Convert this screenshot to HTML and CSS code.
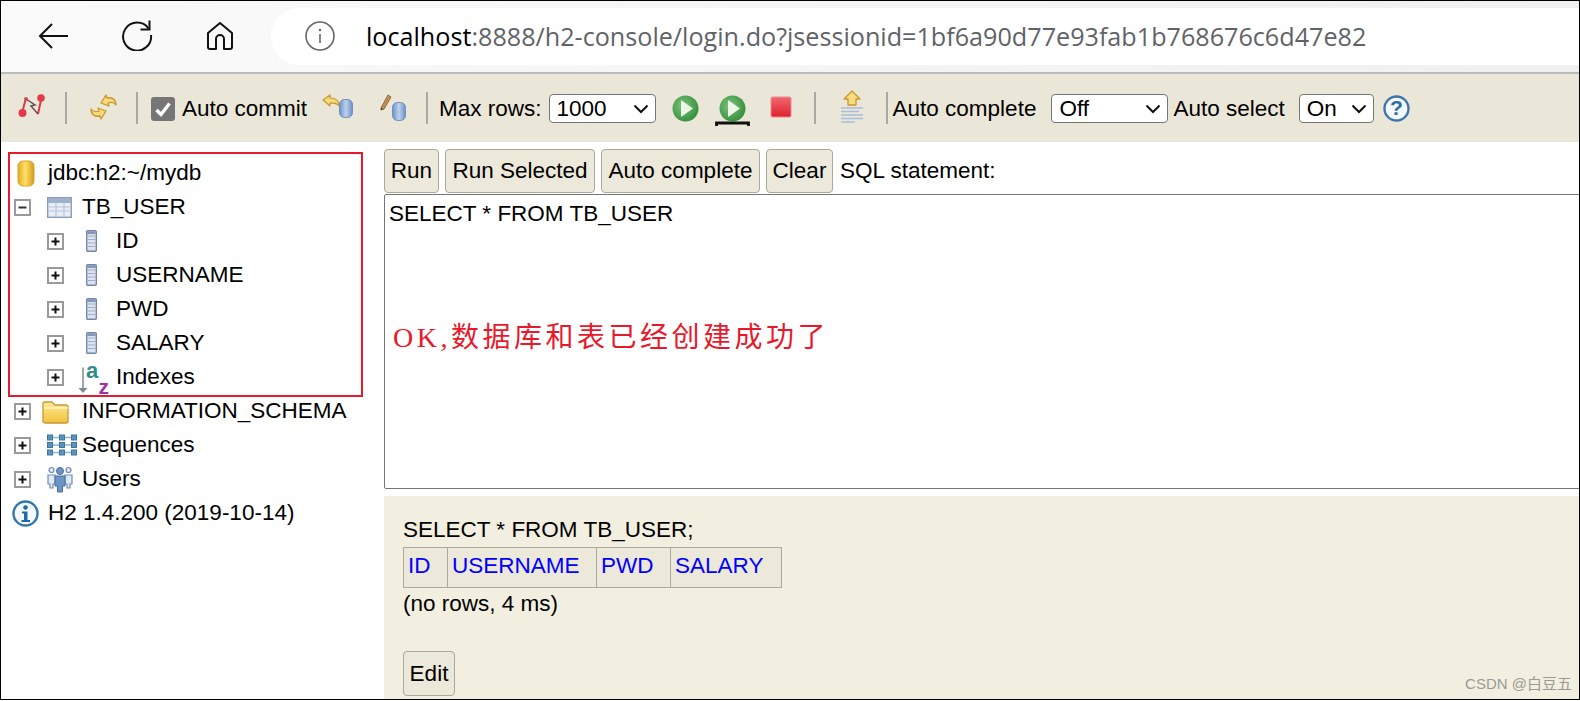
FILE: index.html
```html
<!DOCTYPE html>
<html lang="en">
<head>
<meta charset="utf-8">
<title>H2 Console</title>
<link rel="stylesheet" href="styles.css">
</head>
<body>
<svg class="defs" width="0" height="0" aria-hidden="true">
  <defs>
    <linearGradient id="gold" x1="0" x2="1" y1="0" y2="0"><stop offset="0" stop-color="#e2aa20"/><stop offset=".45" stop-color="#ffe06a"/><stop offset="1" stop-color="#d69a1c"/></linearGradient>
    <linearGradient id="bluedb" x1="0" x2="1" y1="0" y2="0"><stop offset="0" stop-color="#6f92c8"/><stop offset=".5" stop-color="#bcd2ee"/><stop offset="1" stop-color="#6c8fc5"/></linearGradient>
    <radialGradient id="green" cx=".4" cy=".4" r=".7"><stop offset="0" stop-color="#7fc37f"/><stop offset="1" stop-color="#2c8a35"/></radialGradient>
    <linearGradient id="redstop" x1="0" x2="0" y1="0" y2="1"><stop offset="0" stop-color="#f06a72"/><stop offset="1" stop-color="#e0202e"/></linearGradient>
    <linearGradient id="fold" x1="0" x2="0" y1="0" y2="1"><stop offset="0" stop-color="#ffeb94"/><stop offset="1" stop-color="#f0c23e"/></linearGradient>
    <symbol id="ico-column" viewBox="0 0 11 22">
      <rect x=".7" y=".7" width="9.6" height="20.6" rx="1" fill="#dde3ee" stroke="#7485a5" stroke-width="1.4"/>
      <path d="M2 6h7M2 9.500h7M2 13h7M2 16.500h7" stroke="#9fafc9" stroke-width="1.2"/>
      <rect x="1.400" y="1.400" width="8.200" height="2.600" fill="#8497b8"/>
    </symbol>
    <symbol id="ico-plus" viewBox="0 0 17 17">
      <rect x="1" y="1" width="15" height="15" fill="#fff" stroke="#9a9a9a" stroke-width="2"/>
      <path d="M4.500 8.500h8M8.500 4.500v8" stroke="#111" stroke-width="2"/>
    </symbol>
  </defs>
</svg>

<div class="frame">
  <header class="chrome">
    <svg class="nav-back" width="32" height="28" viewBox="0 0 32 28"><path d="M15 2 3 14l12 12M3 14h28" fill="none" stroke="#111" stroke-width="2"/></svg>
    <svg class="nav-reload" width="32" height="32" viewBox="0 0 32 32"><path d="M27.500 9.500A14 14 0 1 0 30 16" fill="none" stroke="#111" stroke-width="2"/><path d="M28.500 1.500v9h-9" fill="none" stroke="#111" stroke-width="2"/></svg>
    <svg class="nav-home" width="28" height="30" viewBox="0 0 28 30"><path d="M2 12 14 2l12 10v14a2 2 0 0 1-2 2h-6V18a4 4 0 0 0-8 0v10H4a2 2 0 0 1-2-2z" fill="none" stroke="#111" stroke-width="2" stroke-linejoin="round"/></svg>
    <div class="urlbar">
      <svg class="url-info" width="30" height="30" viewBox="0 0 30 30"><circle cx="15" cy="15" r="14" fill="none" stroke="#666" stroke-width="1.600"/><path d="M15 13v9" stroke="#666" stroke-width="1.600"/><circle cx="15" cy="9" r="1.200" fill="#666"/></svg>
      <span class="url-host">localhost</span><span class="url-rest">:8888/h2-console/login.do?jsessionid=1bf6a90d77e93fab1b768676c6d47e82</span>
    </div>
  </header>

  <div class="toolbar">
    <svg class="t-disc" width="27" height="24" viewBox="0 0 27 24"><path d="M4.500 17 7.500 6" stroke="#d83a4a" stroke-width="2"/><path d="M23 6 20 20" stroke="#d83a4a" stroke-width="2"/><path d="M8 5l9 6-4 1 7 8" fill="none" stroke="#6b4a4a" stroke-width="1.500"/><circle cx="4.500" cy="19" r="4" fill="#e2394c"/><circle cx="23" cy="4" r="3.800" fill="#e2394c"/><circle cx="8" cy="5" r="2" fill="#d24a55"/></svg>
    <i class="sep s-a"></i>
    <svg class="t-sync" width="27" height="28" viewBox="0 0 27 28"><path d="M11 10l5-8 1 3c5-1 9 1 9 7-2-3-5-3-8-2l1 3z" fill="#f6da7c" stroke="#c9962e" stroke-width="1.300" stroke-linejoin="round"/><path d="M16 18l-5 8-1-3c-5 1-9-1-9-7 2 3 5 3 8 2l-1-3z" fill="#f6da7c" stroke="#c9962e" stroke-width="1.300" stroke-linejoin="round"/></svg>
    <i class="sep s-b"></i>
    <label class="commit"><span class="check"><svg width="24" height="24" viewBox="0 0 24 24"><path d="M5.500 13l4.500 4.500 8.500-11" fill="none" stroke="#fff" stroke-width="3.400"/></svg></span>Auto commit</label>
    <svg class="t-rollback" width="31" height="24" viewBox="0 0 31 24"><path d="M1 6l7-5v3c5 0 9 2 9 8-2-3-5-3-9-3v3z" fill="#f6da7c" stroke="#c9962e" stroke-width="1.200" stroke-linejoin="round"/><rect x="17.500" y="5.500" width="13" height="18" rx="5" fill="url(#bluedb)" stroke="#6f8fc0"/></svg>
    <svg class="t-edit" width="26" height="27" viewBox="0 0 26 27"><path d="M1 14 8 1l3 2-7 12-3 1z" fill="#c68f4c" stroke="#8b6a3e"/><path d="M1 14l2 1-2 1z" fill="#333"/><rect x="12.500" y="8.500" width="13" height="18" rx="5" fill="url(#bluedb)" stroke="#6f8fc0"/></svg>
    <i class="sep s-c"></i>
    <span class="lbl l-max">Max rows:</span>
    <span class="sel sel-rows"><select aria-label="Max rows"><option>1000</option></select><svg width="16" height="10" viewBox="0 0 16 10"><path d="M1.500 1.500 8 8l6.500-6.500" fill="none" stroke="#111" stroke-width="2"/></svg></span>
    <svg class="t-run" width="27" height="27" viewBox="0 0 27 27"><circle cx="13.500" cy="13.500" r="13" fill="url(#green)"/><path d="M9 5l12 8.500L9 22z" fill="#eef5e6"/></svg>
    <svg class="t-runsel" width="35" height="31" viewBox="0 0 35 31"><circle cx="17.500" cy="13.500" r="13" fill="url(#green)"/><path d="M13 5l12 8.500L13 22z" fill="#eef5e6"/><path d="M1.500 31v-3h32v3" fill="none" stroke="#111" stroke-width="2.800"/></svg>
    <svg class="t-stop" width="22" height="22" viewBox="0 0 22 22"><rect x="1" y="1" width="20" height="20" rx="1.500" fill="url(#redstop)" stroke="#e88c90"/></svg>
    <i class="sep s-d"></i>
    <svg class="t-hist" width="24" height="35" viewBox="0 0 24 35"><path d="M12 1l8 8h-4v6H8V9H4z" fill="#f8dc80" stroke="#c9962e" stroke-width="1.300" stroke-linejoin="round"/><path d="M1 18h22M1 21.500h18M1 25h22M1 28.500h22M1 32h14" stroke="#a9bcdd" stroke-width="1.500"/></svg>
    <i class="sep s-e"></i>
    <span class="lbl l-ac">Auto complete</span>
    <span class="sel sel-off"><select aria-label="Auto complete"><option>Off</option></select><svg width="16" height="10" viewBox="0 0 16 10"><path d="M1.500 1.500 8 8l6.500-6.500" fill="none" stroke="#111" stroke-width="2"/></svg></span>
    <span class="lbl l-as">Auto select</span>
    <span class="sel sel-on"><select aria-label="Auto select"><option>On</option></select><svg width="16" height="10" viewBox="0 0 16 10"><path d="M1.500 1.500 8 8l6.500-6.500" fill="none" stroke="#111" stroke-width="2"/></svg></span>
    <svg class="t-help" width="27" height="27" viewBox="0 0 27 27"><circle cx="13.500" cy="13.500" r="12" fill="#f3f8fd" stroke="#3f75ab" stroke-width="2.400"/><text x="13.500" y="20" text-anchor="middle" class="glyph-help">?</text></svg>
  </div>

  <main class="main">
    <nav class="tree">
      <div class="marked">
        <div class="row row-db">
          <span class="db-cell"><svg width="18" height="27" viewBox="0 0 18 27"><rect x="1" y="1" width="16" height="25" rx="5" fill="url(#gold)" stroke="#d9a32a"/></svg></span>
          <span>jdbc:h2:~/mydb</span>
        </div>
        <div class="row">
          <svg class="toggle" viewBox="0 0 17 17"><rect x="1" y="1" width="15" height="15" fill="#fff" stroke="#9a9a9a" stroke-width="2"/><path d="M4.500 8.500h8" stroke="#333" stroke-width="2"/></svg>
          <span class="ic-cell"><svg width="25" height="21" viewBox="0 0 25 21"><rect x=".7" y=".7" width="23.600" height="19.600" fill="#e8edf5" stroke="#8b9dbc" stroke-width="1.400"/><rect x="1" y="1" width="23" height="5" fill="#9fb0cc"/><path d="M2 10h21M2 14h21M9 6v14M17 6v14" stroke="#b8c6dc" stroke-width="1.200"/></svg></span>
          <span>TB_USER</span>
        </div>
        <div class="row lvl1"><svg class="toggle"><use href="#ico-plus"/></svg><span class="ic-cell col"><svg width="11" height="22"><use href="#ico-column"/></svg></span><span>ID</span></div>
        <div class="row lvl1"><svg class="toggle"><use href="#ico-plus"/></svg><span class="ic-cell col"><svg width="11" height="22"><use href="#ico-column"/></svg></span><span>USERNAME</span></div>
        <div class="row lvl1"><svg class="toggle"><use href="#ico-plus"/></svg><span class="ic-cell col"><svg width="11" height="22"><use href="#ico-column"/></svg></span><span>PWD</span></div>
        <div class="row lvl1"><svg class="toggle"><use href="#ico-plus"/></svg><span class="ic-cell col"><svg width="11" height="22"><use href="#ico-column"/></svg></span><span>SALARY</span></div>
        <div class="row lvl1">
          <svg class="toggle"><use href="#ico-plus"/></svg>
          <span class="ic-cell idx"><svg width="32" height="42" viewBox="0 0 32 42"><path d="M5 11.500v22" stroke="#7d8a94" stroke-width="1.500"/><path d="M.5 32h9L5 37z" fill="#7d8a94"/><text x="8" y="21.500" class="glyph-a">a</text><text x="20.400" y="37.500" class="glyph-z">z</text></svg></span>
          <span>Indexes</span>
        </div>
      </div>
      <div class="row">
        <svg class="toggle"><use href="#ico-plus"/></svg>
        <span class="ic-cell ic-wide"><svg width="28" height="25" viewBox="0 0 28 25"><path d="M1 5a2 2 0 0 1 2-2h7l3 3h11a2 2 0 0 1 2 2v14a2 2 0 0 1-2 2H3a2 2 0 0 1-2-2z" fill="url(#fold)" stroke="#c79a34" stroke-width="1.300"/><path d="M2 9h24" stroke="#fff6c8" stroke-width="1.500"/></svg></span>
        <span>INFORMATION_SCHEMA</span>
      </div>
      <div class="row">
        <svg class="toggle"><use href="#ico-plus"/></svg>
        <span class="ic-cell"><svg width="30" height="22" viewBox="0 0 30 22"><path d="M2 3.500h26M2 11h26M2 18.500h26" stroke="#8fb5d4" stroke-width="1.500"/><g fill="#5b93bd" stroke="#3d779f"><rect x=".5" y="1" width="5" height="5"/><rect x="12.500" y="1" width="5" height="5"/><rect x="24.500" y="1" width="5" height="5"/><rect x=".5" y="8.500" width="5" height="5"/><rect x="12.500" y="8.500" width="5" height="5"/><rect x="24.500" y="8.500" width="5" height="5"/><rect x=".5" y="16" width="5" height="5"/><rect x="12.500" y="16" width="5" height="5"/><rect x="24.500" y="16" width="5" height="5"/></g></svg></span>
        <span>Sequences</span>
      </div>
      <div class="row">
        <svg class="toggle"><use href="#ico-plus"/></svg>
        <span class="ic-cell"><svg width="26" height="28" viewBox="0 0 26 28"><g fill="#dfe8f3" stroke="#6f8db5" stroke-width="1.200"><circle cx="4.500" cy="5" r="2.500"/><circle cx="21.500" cy="5" r="2.500"/><path d="M1 10h7v9H6v4H3v-4H1zM18 10h7v9h-2v4h-3v-4h-2z"/></g><circle cx="13" cy="6" r="3.500" fill="#6d94c6" stroke="#47719f"/><path d="M8 11h10v10h-2.500v6h-5v-6H8z" fill="#6d94c6" stroke="#47719f"/></svg></span>
        <span>Users</span>
      </div>
      <div class="row row-ver">
        <span class="ver-cell"><svg width="27" height="27" viewBox="0 0 27 27"><circle cx="13.500" cy="13.500" r="12" fill="#f3f8fd" stroke="#3377aa" stroke-width="2.400"/><circle cx="13.500" cy="7.500" r="2.300" fill="#1f6aa0"/><path d="M10 11.500h5.500V20H18v2H9.500v-2H12v-6.500h-2z" fill="#1f6aa0"/></svg></span>
        <span>H2 1.4.200 (2019-10-14)</span>
      </div>
    </nav>

    <section class="content">
      <div class="actions">
        <button type="button" class="btn b-run">Run</button>
        <button type="button" class="btn b-sel">Run Selected</button>
        <button type="button" class="btn b-auto">Auto complete</button>
        <button type="button" class="btn b-clear">Clear</button>
        <span class="sql-label">SQL statement:</span>
      </div>
      <textarea class="sql" aria-label="SQL statement">SELECT * FROM TB_USER</textarea>
      <div class="result">
        <div class="stmt">SELECT * FROM TB_USER;</div>
        <table class="grid">
          <tr><th class="c-id"><a>ID</a></th><th class="c-user"><a>USERNAME</a></th><th class="c-pwd"><a>PWD</a></th><th class="c-sal"><a>SALARY</a></th></tr>
        </table>
        <div class="meta">(no rows, 4 ms)</div>
        <button type="button" class="btn btn-edit">Edit</button>
      </div>
      <p class="note">OK,数据库和表已经创建成功了</p>
      <span class="mark">CSDN @白豆五</span>
    </section>
  </main>
</div>
</body>
</html>
```

FILE: styles.css
```css
* { box-sizing: border-box; }
html, body { margin: 0; padding: 0; height: 701px; overflow: hidden; background: #fff; }
body, button, select, textarea {
  font-family: "Liberation Sans", Arial, sans-serif;
  font-size: 22.5px;
  color: #000;
}
.defs { position: absolute; }
.frame {
  width: 1580px;
  height: 700px;
  border: 1px solid #000;
  display: flex;
  flex-direction: column;
  overflow: hidden;
}

/* browser chrome */
.chrome {
  flex: none;
  height: 73px;
  border-bottom: 2px solid #bbb;
  background: linear-gradient(90deg, #fafafa, #f0f0f0);
  display: flex;
  align-items: center;
}
.chrome svg { flex: none; }
.nav-back { margin: 0 0 1px 36px; }
.nav-reload { margin: 0 0 3px 52px; }
.nav-home { margin: 0 0 1px 53px; }
.urlbar {
  flex: 1;
  height: 57px;
  margin: 0 0 1px 37px;
  background: #fff;
  border-radius: 29px 0 0 29px;
  display: flex;
  align-items: center;
  padding-left: 34px;
  font-family: "Open Sans", "Noto Sans", sans-serif;
  font-size: 25.17px;
  white-space: nowrap;
}
.url-info { margin-right: 31px; }
.url-rest { color: #5f6368; }

/* H2 toolbar */
.toolbar {
  flex: none;
  height: 68px;
  background: #ebe7d8;
  display: flex;
  align-items: center;
  white-space: nowrap;
}
.toolbar svg, .toolbar .sep { flex: none; }
.sep { display: block; width: 2px; height: 32px; background: #a8a8a4; }
.t-disc { margin-left: 17px; margin-bottom: 4px; }
.s-a { margin-left: 20px; }
.t-sync { margin-left: 23px; margin-bottom: 2px; }
.s-b { margin-left: 19px; }
.commit { display: flex; align-items: center; margin-left: 13px; margin-top: 1px; }
.check {
  width: 24px; height: 24px; margin-right: 7px;
  background: #767676; border-radius: 3px; display: block;
}
.check svg { display: block; }
.t-rollback { margin-left: 15px; margin-bottom: 4px; }
.t-edit { margin-left: 27px; margin-bottom: 2px; }
.s-c { margin-left: 20px; }
.lbl { margin-top: 1px; }
.l-max { margin-left: 11px; }
.sel { position: relative; display: block; flex: none; height: 29px; }
.sel select {
  appearance: none;
  width: 100%;
  height: 100%;
  border: 1px solid #767676;
  border-radius: 4px;
  background: #fff;
  padding: 0 0 0 7px;
  font-size: 22.5px;
  line-height: 27px;
}
.sel svg { position: absolute; right: 7px; top: 10px; }
.sel-rows { width: 107px; margin-left: 7px; }
.t-run { margin-left: 16px; }
.t-runsel { margin-left: 16px; margin-top: 5px; }
.t-stop { margin-left: 20px; margin-bottom: 2px; }
.s-d { margin-left: 22px; }
.t-hist { margin-left: 24px; margin-bottom: 2px; }
.s-e { margin-left: 22px; }
.l-ac { margin-left: 5px; }
.sel-off { width: 117px; margin-left: 15px; }
.l-as { margin-left: 5px; }
.sel-on { width: 75px; margin-left: 14px; }
.t-help { margin-left: 9px; }
.glyph-help { font: bold 21px "Liberation Sans", sans-serif; fill: #2f6ca6; }
.glyph-a { font: bold 22px "Liberation Sans", sans-serif; fill: #2f8f86; }
.glyph-z { font: bold 21px "Liberation Sans", sans-serif; fill: #a0329c; }

/* main area */
.main { flex: 1; display: flex; position: relative; min-height: 0; }
.tree { flex: none; width: 383px; padding: 13px 0 0 10px; }
.marked { width: 349px; padding-bottom: 1px; margin-bottom: -1px; outline: 2px solid #e8192c; outline-offset: 1px; }
.row { display: flex; align-items: center; height: 34px; padding: 2px 0 0 3px; white-space: nowrap; }
.lvl1 { padding-left: 36px; }
.toggle { flex: none; width: 17px; height: 17px; }
.ic-cell { flex: none; width: 51px; padding-left: 16px; display: flex; align-items: center; }
.ic-cell svg { display: block; flex: none; }
.lvl1 .ic-cell { width: 52px; }
.ic-cell.col { padding-left: 22px; }
.ic-cell.idx { padding-left: 14px; height: 32px; }
.ic-cell.ic-wide { padding-left: 11px; }
.row-db { padding-left: 6px; }
.db-cell { flex: none; width: 31px; display: flex; }
.row-ver { padding-left: 1px; }
.ver-cell { flex: none; width: 36px; display: flex; }

.content { flex: 1; min-width: 0; position: relative; padding-top: 7px; overflow: hidden; }
.actions { display: flex; align-items: center; height: 45px; }
.btn {
  flex: none;
  height: 44px;
  padding: 0;
  margin: 0 6px 1px 0;
  background: #ece8da;
  border: 1px solid #aaa99c;
  border-radius: 4px;
  text-align: center;
  white-space: nowrap;
}
.b-run { width: 55px; }
.b-sel { width: 150px; }
.b-auto { width: 159px; }
.b-clear { width: 67px; }
.sql-label { margin: 0 0 1px 1px; }
.sql {
  display: block;
  width: 1400px;
  height: 295px;
  margin: 0;
  padding: 6px 4px;
  border: 1px solid #767676;
  border-radius: 2px;
  resize: none;
  outline: none;
  line-height: 25px;
  background: #fff;
  overflow: hidden;
}
.result { margin-top: 7px; height: 205px; background: #f3efe0; padding: 21px 19px 0; }
.stmt { line-height: 26px; height: 30px; }
.grid { border-collapse: collapse; background: #ece8da; }
.grid th { height: 40px; padding: 0 4px 3px; border: 1px solid #aaa99c; font-weight: normal; text-align: left; }
.grid a { color: #0000ff; }
.c-id { width: 44px; }
.c-user { width: 149px; }
.c-pwd { width: 74px; }
.c-sal { width: 111px; }
.meta { height: 63px; line-height: 32px; }
.btn-edit { display: block; width: 52px; height: 45px; margin: 0; }
.note {
  position: absolute;
  left: 9px;
  top: 176px;
  margin: 0;
  color: #e8192c;
  font-family: "Liberation Serif", "Noto Sans CJK SC", serif;
  font-size: 28px;
  line-height: 40px;
  letter-spacing: 3.5px;
  white-space: nowrap;
}
.mark {
  position: absolute;
  right: 7px;
  bottom: 6px;
  color: #9a9a92;
  font-size: 15px;
  font-family: "Liberation Sans", "Noto Sans CJK SC", sans-serif;
  white-space: nowrap;
}
```
